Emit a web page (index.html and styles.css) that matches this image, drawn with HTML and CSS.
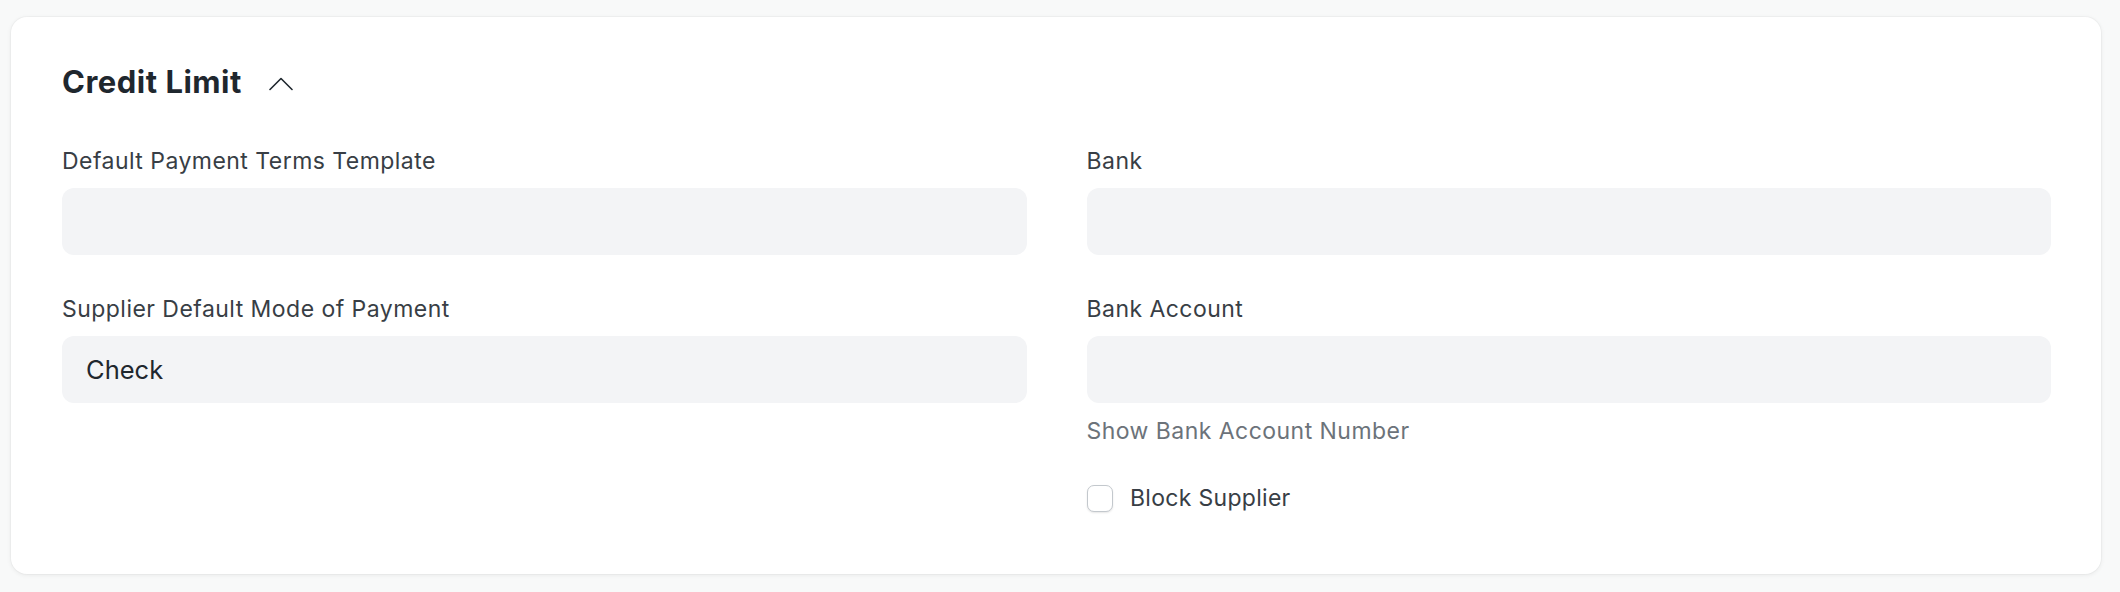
FILE: index.html
```html
<!DOCTYPE html>
<html lang="en">
<head>
<meta charset="utf-8">
<title>Credit Limit</title>
<link rel="stylesheet" href="styles.css">
</head>
<body>
<section class="card">
  <div class="head">
    <h2 class="title">Credit Limit</h2>
    <svg class="chevron" width="24" height="14" viewBox="0 0 24 14" aria-hidden="true">
      <polyline points="1,12.5 12,1.5 23,12.5" fill="none" stroke="#1f272e" stroke-width="1.6" stroke-linecap="round" stroke-linejoin="round"/>
    </svg>
  </div>
  <div class="grid">
    <div class="col">
      <div class="field">
        <div class="label">Default Payment Terms Template</div>
        <div class="input"></div>
      </div>
      <div class="field">
        <div class="label">Supplier Default Mode of Payment</div>
        <div class="input">Check</div>
      </div>
    </div>
    <div class="col">
      <div class="field">
        <div class="label">Bank</div>
        <div class="input"></div>
      </div>
      <div class="field field-last">
        <div class="label">Bank Account</div>
        <div class="input"></div>
        <div class="help">Show Bank Account Number</div>
      </div>
      <label class="check">
        <span class="box"></span>
        <span class="check-text">Block Supplier</span>
      </label>
    </div>
  </div>
</section>
</body>
</html>
```
FILE: styles.css
```css
html, body {
  margin: 0;
  padding: 0;
}
body {
  background: #f8f9f9;
  font-family: Inter, "Noto Sans", sans-serif;
  color: #1f272e;
  width: 2120px;
  height: 592px;
  overflow: hidden;
}
.card {
  margin: 17px 19px 0 11px;
  height: 557px;
  box-sizing: border-box;
  background: #ffffff;
  border-radius: 16px;
  box-shadow: 0 0 0 1px rgba(0, 0, 0, 0.025), 0 1px 5px rgba(0, 0, 0, 0.07);
  padding: 47px 50px 0 51px;
}
.head {
  display: flex;
  align-items: flex-start;
  height: 36px;
}
.title {
  margin: 0;
  font-size: 31px;
  line-height: 36px;
  font-weight: 700;
  color: #1f272e;
  letter-spacing: 0.5px;
}
.chevron {
  margin-top: 13px;
  margin-left: 27px;
}
.grid {
  display: grid;
  grid-template-columns: 1fr 1fr;
  column-gap: 60px;
  margin-top: 48px;
}
.field {
  margin-bottom: 41px;
}
.field-last {
  margin-bottom: 0;
}
.label {
  font-size: 23px;
  line-height: 26px;
  letter-spacing: 0.46px;
  color: #383e45;
  margin-bottom: 14px;
}
.input {
  height: 67px;
  background: #f3f4f6;
  border-radius: 12px;
  display: flex;
  align-items: center;
  padding: 0 24px;
  font-size: 25.5px;
  color: #1f272e;
  box-sizing: border-box;
}
.help {
  margin-top: 15px;
  font-size: 23px;
  line-height: 26px;
  letter-spacing: 0.46px;
  color: #6c737a;
}
.check {
  display: flex;
  align-items: center;
  margin-top: 41px;
  gap: 17px;
}
.box {
  width: 26.5px;
  height: 26.5px;
  box-sizing: border-box;
  border: 1.5px solid #c3c8cd;
  border-radius: 7px;
  background: #fff;
  box-shadow: 0 1px 2px rgba(0, 0, 0, 0.1);
}
.check-text {
  font-size: 23px;
  line-height: 26px;
  letter-spacing: 0.3px;
  color: #383e45;
}
```
